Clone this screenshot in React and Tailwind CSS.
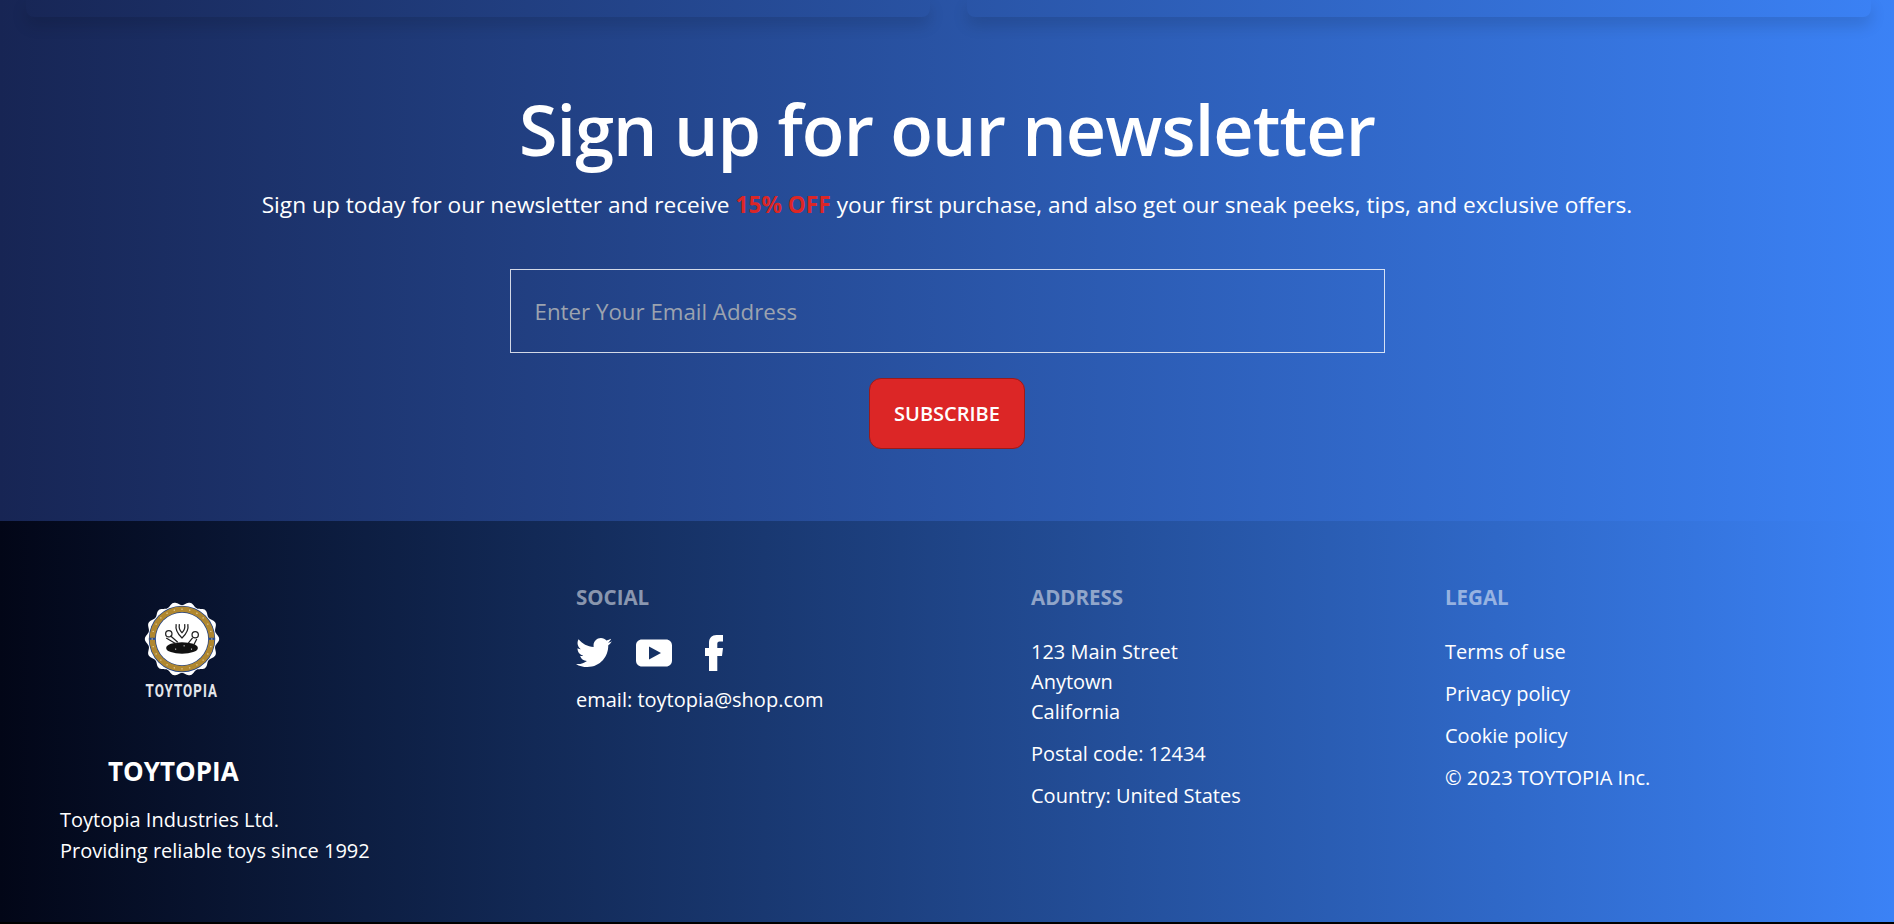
const legalLinks = ["Terms of use", "Privacy policy", "Cookie policy", "© 2023 TOYTOPIA Inc."];

// soft scalloped badge edge, computed once
const badgeEdge = Array.from({ length: 240 }, (_, i) => {
  const a = (i / 240) * Math.PI * 2;
  const r = 33.7 + 1.5 * Math.cos(a * 14);
  return `${(36 + Math.cos(a) * r).toFixed(2)},${(36 + Math.sin(a) * r).toFixed(2)}`;
}).join(" ");

const ringDots = Array.from({ length: 24 }, (_, i) => {
  const a = (i / 24) * Math.PI * 2;
  return [36 + Math.cos(a) * 28.3, 36 + Math.sin(a) * 28.3];
});

function Logo() {
  return (
    <svg width="76" height="76" viewBox="0 0 72 72">
      <polygon points={badgeEdge} fill="#fff" />
      <circle cx="36" cy="36" r="31.500" fill="#1d3f86" />
      <circle cx="36" cy="36" r="30.800" fill="#b0872f" />
      <rect x="5" y="34.800" width="62" height="2" fill="#24498f" />
      {ringDots.map(([cx, cy], i) => (
        <circle key={i} cx={cx} cy={cy} r="0.6" fill="#f1e2ba" />
      ))}
      <circle cx="36" cy="36" r="25.500" fill="#1d3f86" />
      <circle cx="36" cy="36" r="24.800" fill="#fff" />
      <ellipse cx="36" cy="44.500" rx="15" ry="5.500" fill="#111" />
      <g fill="none" stroke="#222" strokeWidth="1.2">
        <circle cx="23.500" cy="31" r="3" />
        <circle cx="48.500" cy="32" r="3" />
        <path d="M30.500 22c-1 5 1 9 5.500 13c4.500-4 6.500-8 5.500-13M33.500 22c-.5 3 0 6 2.500 8c2.500-2 3-5 2.500-8" />
        <path d="M21 35l10 6M25 33l7 6M50 36l-3 6M46 35l-4 5" />
      </g>
      <circle cx="30" cy="45.500" r="0.6" fill="#fff" />
      <circle cx="38" cy="42.500" r="0.6" fill="#fff" />
      <circle cx="45" cy="45.500" r="0.6" fill="#fff" />
    </svg>
  );
}

function TwitterIcon() {
  return (
    <svg width="36" height="36" viewBox="0 0 24 24" fill="#fff">
      <path d="M24 4.400c-.9.4-1.800.7-2.800.8 1-.6 1.800-1.600 2.200-2.700-1 .6-2 1-3.100 1.200-.9-1-2.200-1.700-3.700-1.700-2.700 0-4.900 2.200-4.900 4.900 0 .4 0 .8.100 1.100C7.700 7.800 4.100 5.900 1.700 2.900 1.300 3.600 1 4.500 1 5.400c0 1.700.9 3.200 2.200 4.100-.8 0-1.600-.2-2.200-.6v.1c0 2.400 1.700 4.400 3.900 4.800-.4.100-.8.200-1.300.200-.3 0-.6 0-.9-.100.6 2 2.400 3.400 4.600 3.400-1.700 1.300-3.800 2.100-6.100 2.100-.4 0-.8 0-1.200-.100 2.200 1.400 4.800 2.100 7.500 2.100 9.100 0 14-7.500 14-14v-.6c1-.7 1.800-1.600 2.500-3z" />
    </svg>
  );
}

function YoutubeIcon() {
  return (
    <svg width="36" height="36" viewBox="0 0 36 36">
      <path
        fillRule="evenodd"
        fill="#fff"
        d="M6 4.500h24c3.500 0 6 2.500 6 6v15c0 3.500-2.500 6-6 6H6c-3.500 0-6-2.500-6-6v-15c0-3.500 2.500-6 6-6zM13 11.500v13l12-6.500z"
      />
    </svg>
  );
}

function FacebookIcon() {
  return (
    <svg width="36" height="36" viewBox="0 0 36 36" fill="#fff">
      <path d="M13 36V21H9v-8h4V7.500C13 3 16 0 20.500 0H27v6.500h-3.500c-1.600 0-2.200.9-2.200 2.500v4H27l-1 8h-4.700v15z" />
    </svg>
  );
}

export default function App() {
  return (
    <div className="min-h-[924px] bg-black font-['Open_Sans','Noto_Sans',sans-serif] text-white">
      <section className="h-[521px] bg-[linear-gradient(to_right,#172554,#3b82f6)]">
        <div className="flex h-[17px] gap-[37px] pl-[26px] pr-[23px]">
          <div className="flex-1 rounded-b-lg shadow-[0_8px_16px_rgba(0,0,0,0.14)]" />
          <div className="flex-1 rounded-b-lg shadow-[0_8px_16px_rgba(0,0,0,0.14)]" />
        </div>
        <div className="flex flex-col items-center pt-[67px]">
          <h2 className="text-[70px] leading-[90px] font-semibold tracking-[-0.9px]">Sign up for our newsletter</h2>
          <p className="mt-[15px] text-[22.7px] leading-8">
            Sign up today for our newsletter and receive <span className="font-bold text-[#dc2626]">15% OFF</span> your first purchase, and also get our sneak peeks, tips, and exclusive offers.
          </p>
          <input
            className="mt-[48px] h-[84px] w-[875px] border border-white/80 bg-transparent px-6 pt-px text-[22.300px] placeholder:text-[#9ca3af]"
            placeholder="Enter Your Email Address"
          />
          <button className="mt-[25px] h-[71px] w-[156px] rounded-xl border border-[#991b1b] bg-[#dc2626] text-[20px] font-semibold">SUBSCRIBE</button>
        </div>
      </section>
      <footer className="flex h-[401px] bg-[linear-gradient(to_right,#020617,#3b82f6)] text-xl leading-[30px]">
        <div className="w-[576px] pl-[60px] pt-[80px]">
          <div className="flex w-[244px] flex-col items-center">
            <Logo />
            <span className="mt-1 scale-x-[0.7] font-['Roboto',sans-serif] text-[19px] leading-5 font-bold tracking-[1.500px] text-gray-200">TOYTOPIA</span>
          </div>
          <h3 className="mt-[54px] pl-[48px] text-[26px] leading-8 font-bold">TOYTOPIA</h3>
          <p className="mt-[17px] leading-[31px]">Toytopia Industries Ltd.<br />Providing reliable toys since 1992</p>
        </div>
        <div className="w-[455px] pt-[62px]">
          <h4 className="text-[20.500px] leading-7 font-bold text-white/50">SOCIAL</h4>
          <div className="mt-6 flex gap-6">
            <TwitterIcon />
            <YoutubeIcon />
            <FacebookIcon />
          </div>
          <p className="mt-[14px]">email: toytopia@shop.com</p>
        </div>
        <div className="w-[414px] pt-[62px]">
          <h4 className="text-[20.500px] leading-7 font-bold text-white/50">ADDRESS</h4>
          <p className="mt-[26px]">123 Main Street<br />Anytown<br />California</p>
          <p className="mt-3">Postal code: 12434</p>
          <p className="mt-3">Country: United States</p>
        </div>
        <div className="pt-[62px]">
          <h4 className="text-[20.500px] leading-7 font-bold text-white/50">LEGAL</h4>
          <ul className="mt-[26px] flex flex-col gap-3">
            {legalLinks.map((item) => (
              <li key={item}>{item}</li>
            ))}
          </ul>
        </div>
      </footer>
    </div>
  );
}
